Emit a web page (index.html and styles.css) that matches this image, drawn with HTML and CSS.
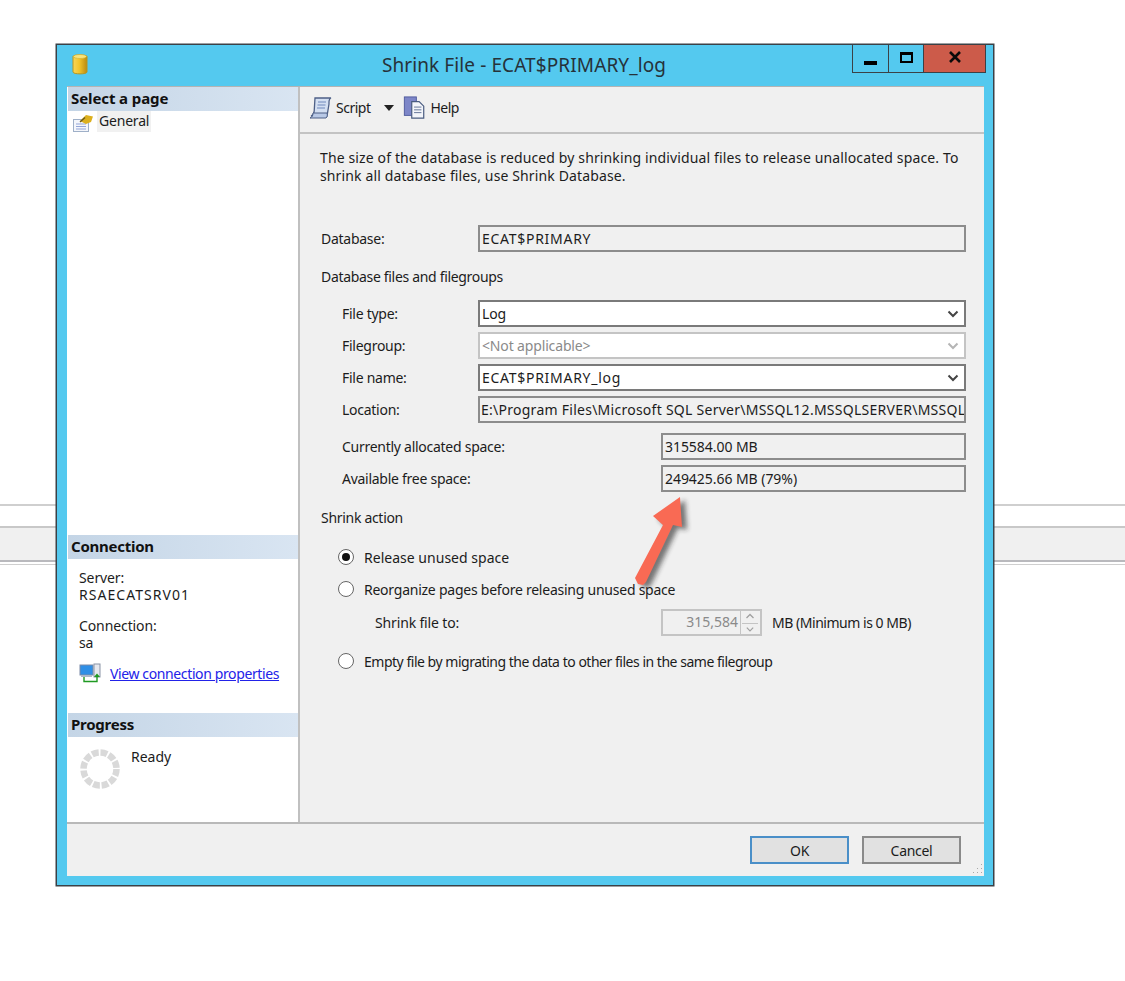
FILE: index.html
```html
<!DOCTYPE html>
<html lang="en">
<head>
<meta charset="utf-8">
<title>Shrink File</title>
<link rel="stylesheet" href="styles.css">
</head>
<body>
<div class="backdrop" aria-hidden="true">
  <div class="bg-line"></div>
  <div class="bg-band"></div>
  <div class="bg-line2"></div>
</div>
<div class="window">
  <header class="titlebar">
    <svg class="app-icon" width="18" height="24" viewBox="0 0 18 24">
      <defs><linearGradient id="gold" x1="0" x2="1" y1="0" y2="0"><stop offset="0" stop-color="#f7d65a"/><stop offset=".45" stop-color="#f2c42a"/><stop offset="1" stop-color="#b98a12"/></linearGradient></defs>
      <path d="M2 4.500C2 2.500 16 2.500 16 4.500V20C16 22.500 2 22.500 2 20Z" fill="url(#gold)" stroke="#b8961e" stroke-width="1"/>
      <ellipse cx="9" cy="4.500" rx="6.500" ry="2" fill="#f7e47e" stroke="#d1ad2c" stroke-width=".6"/>
    </svg>
    <div class="title">Shrink File - ECAT$PRIMARY_log</div>
    <div class="controls">
      <div class="ctl ctl-min"><span class="min-glyph"></span></div>
      <div class="ctl ctl-max"><span class="max-glyph"></span></div>
      <div class="ctl ctl-close">
        <svg width="14" height="12" viewBox="0 0 14 12"><path d="M2 1 12 11M12 1 2 11" stroke="#0b0b0b" stroke-width="2.600" fill="none"/></svg>
      </div>
    </div>
  </header>
  <div class="client">
    <div class="main">
      <aside class="side">
        <section class="side-top">
          <h2 class="side-head head-select">Select a page</h2>
          <div class="page-item">
            <svg class="page-icon" width="22" height="18" viewBox="0 0 22 18">
              <rect x="1.500" y="5.500" width="15" height="12" fill="#f4f6fb" stroke="#9fb0c8"/>
              <path d="M4 10h10M4 12.500h10M4 15h10" stroke="#93a5d8"/>
              <path d="M8 7 14 1 21 2.500 19 8 14 10Z" fill="#dcb01e"/>
              <path d="M8 8 13 3.500" stroke="#6a5a1a" stroke-width="1.400"/>
            </svg>
            <span class="page-name">General</span>
          </div>
        </section>
        <section class="side-conn">
          <h2 class="side-head">Connection</h2>
          <div class="conn-body">
            <div class="conn-block"><div>Server:</div><div class="upper">RSAECATSRV01</div></div>
            <div class="conn-block"><div>Connection:</div><div>sa</div></div>
            <div class="conn-link-row">
              <svg width="22" height="20" viewBox="0 0 22 20">
                <rect x="1" y="2" width="13" height="10" fill="#2f8fe6" stroke="#7b8aa8"/>
                <rect x="2" y="12" width="11" height="2" fill="#aeb7c8"/>
                <rect x="15" y="1" width="6" height="13" fill="#e6e8ee" stroke="#8a93a5"/>
                <path d="M5 14v4.500h13V13" fill="none" stroke="#1f9a22" stroke-width="1.400"/>
                <path d="M15 14l3-3.500 3 3.500z" fill="#1f9a22"/>
              </svg>
              <a class="conn-link" href="#">View connection properties</a>
            </div>
          </div>
        </section>
        <section class="side-progress">
          <h2 class="side-head">Progress</h2>
          <div class="prog-body">
            <svg class="spinner" width="42" height="42" viewBox="0 0 42 42">
              <circle cx="21" cy="21" r="16.500" fill="none" stroke="#d9d9d9" stroke-width="6.500" stroke-dasharray="6.800 1.840"/>
            </svg>
            <span class="ready">Ready</span>
          </div>
        </section>
      </aside>
      <main class="pane">
        <div class="toolbar">
          <svg class="tool-icon" width="24" height="24" viewBox="0 0 24 24">
            <path d="M6 2H22C19.500 3 20 6 20 8L18 20H2C4.500 19 5 17 5.200 15Z" fill="#d3dff2" stroke="#4d5f86" stroke-width="1.300"/>
            <path d="M9 6h8M8.500 9h8M8 12h8" stroke="#6f88bc"/>
            <path d="M1 22H17C18.500 21 18.500 18 18 17H4C4 20 3 21 1 22Z" fill="#b9c9e6" stroke="#4d5f86"/>
          </svg>
          <span class="tool-label">Script</span>
          <span class="tool-caret"></span>
          <svg class="tool-icon help-icon" width="23" height="24" viewBox="0 0 24 26">
            <rect x="1" y="1" width="13" height="20" fill="#7d86c8" stroke="#4e5a9c"/>
            <path d="M9 6h8l5 5v13H9Z" fill="#f3f5fa" stroke="#4a5c80" stroke-width="1.300"/>
            <path d="M11.500 12h8M11.500 15h8M11.500 18h8" stroke="#5d6f92"/>
          </svg>
          <span class="tool-label">Help</span>
        </div>
        <div class="form">
          <p class="intro">The size of the database is reduced by shrinking individual files to release unallocated space. To shrink all database files, use Shrink Database.</p>
          <div class="row row-db"><label class="lbl lbl-outer">Database:</label><div class="field ro upper-field">ECAT$PRIMARY</div></div>
          <div class="group-title gt-files">Database files and filegroups</div>
          <div class="rows">
            <div class="row"><label class="lbl">File type:</label><div class="field combo"><span>Log</span><svg class="chev" width="12" height="8" viewBox="0 0 12 8"><path d="M1.500 1.500 6 6l4.500-4.500" fill="none" stroke="#444" stroke-width="2"/></svg></div></div>
            <div class="row"><label class="lbl">Filegroup:</label><div class="field combo disabled"><span>&lt;Not applicable&gt;</span><svg class="chev" width="12" height="8" viewBox="0 0 12 8"><path d="M1.500 1.500 6 6l4.500-4.500" fill="none" stroke="#b5b5b5" stroke-width="2"/></svg></div></div>
            <div class="row"><label class="lbl">File name:</label><div class="field combo upper-field"><span>ECAT$PRIMARY_log</span><svg class="chev" width="12" height="8" viewBox="0 0 12 8"><path d="M1.500 1.500 6 6l4.500-4.500" fill="none" stroke="#444" stroke-width="2"/></svg></div></div>
            <div class="row"><label class="lbl">Location:</label><div class="field ro path">E:\Program Files\Microsoft SQL Server\MSSQL12.MSSQLSERVER\MSSQL</div></div>
          </div>
          <div class="rows rows-space">
            <div class="row"><label class="lbl lbl-wide">Currently allocated space:</label><div class="field ro num">315584.00 MB</div></div>
            <div class="row"><label class="lbl lbl-wide">Available free space:</label><div class="field ro num">249425.66 MB (79%)</div></div>
          </div>
          <div class="group-title gt-action">Shrink action</div>
          <div class="actions">
            <div class="radio-row"><span class="radio checked"></span><span class="rt-release">Release unused space</span></div>
            <div class="radio-row"><span class="radio"></span><span class="rt-reorg">Reorganize pages before releasing unused space</span></div>
            <div class="shrink-row">
              <span class="shrink-lbl">Shrink file to:</span>
              <div class="spin"><span class="spin-val">315,584</span><div class="spin-btns"><svg width="16" height="11" viewBox="0 0 16 11"><path d="M4.500 7 8 3.500 11.500 7" fill="none" stroke="#a0a0a0" stroke-width="1.300"/></svg><svg width="16" height="11" viewBox="0 0 16 11"><path d="M4.500 4 8 7.500 11.500 4" fill="none" stroke="#a0a0a0" stroke-width="1.300"/></svg></div></div>
              <span class="unit">MB (Minimum is 0 MB)</span>
            </div>
            <div class="radio-row"><span class="radio"></span><span class="rt-empty">Empty file by migrating the data to other files in the same filegroup</span></div>
          </div>
        </div>
      </main>
    </div>
    <footer class="footer">
      <button class="btn btn-default" type="button">OK</button>
      <button class="btn" type="button">Cancel</button>
      <svg class="grip" width="12" height="12" viewBox="0 0 12 12"><path d="M10 1h1v1h-1zM6 5h1v1H6zM10 5h1v1h-1zM2 9h1v1H2zM6 9h1v1H6zM10 9h1v1h-1z" fill="#a8a8a8"/></svg>
    </footer>
  </div>
</div>
<svg class="arrow" width="80" height="110" viewBox="0 0 80 110" aria-hidden="true">
  <defs><filter id="sh" x="-30%" y="-30%" width="170%" height="170%"><feGaussianBlur stdDeviation="2.500"/></filter></defs>
  <path d="M45 10 18 29 28 38 0 91 3 97 8 98 11 95 38 38 47 40Z" transform="translate(5 3)" fill="#222" opacity=".6" filter="url(#sh)"/>
  <path d="M45 10 18 29 28 38 0 91 3 97 8 98 11 95 38 38 47 40Z" fill="#f96a54"/>
</svg>
</body>
</html>
```
FILE: styles.css
```css
* { box-sizing: border-box; }
html, body { margin: 0; padding: 0; }
body {
  position: relative;
  width: 1125px;
  height: 981px;
  overflow: hidden;
  background: #fff;
  font-family: "Noto Sans", "Open Sans", sans-serif;
  font-size: 14px;
  color: #1c1c1c;
}
.backdrop { position: absolute; left: 0; right: 0; top: 504px; }
.bg-line { height: 2px; background: #cfcfcf; }
.bg-band { margin-top: 20px; height: 34px; background: #f0f0f0; border-top: 2px solid #c8c8c8; }
.bg-line2 { height: 5px; border-top: 2px solid #b9b9bd; border-bottom: 1px solid #cfcfcf; background: #fff; }

.window {
  position: absolute;
  left: 56px;
  top: 44px;
  width: 938px;
  height: 842px;
  background: #54c9ef;
  border: 1px solid #3b4146;
  box-shadow: 0 0 0 .5px #3b4146;
  display: flex;
  flex-direction: column;
}
.titlebar { position: relative; height: 41px; flex: none; display: flex; align-items: center; justify-content: center; }
.app-icon { position: absolute; left: 14px; top: 7px; }
.title { font-size: 19px; color: #26323a; letter-spacing: .1px; margin-top: -2px; margin-left: -2px; }
.controls { position: absolute; right: 7px; top: 0; height: 28px; display: flex; border: 1px solid #3b4146; border-top: 0; }
.ctl { height: 27px; display: flex; align-items: center; justify-content: center; }
.ctl-min { width: 36px; border-right: 1px solid #3b4146; }
.ctl-max { width: 35px; border-right: 1px solid #3b4146; }
.ctl-close { width: 61px; background: #cc5b4a; }
.min-glyph { width: 13px; height: 4px; background: #000; margin-top: 8px; }
.max-glyph { width: 13px; height: 11px; border: 2.500px solid #000; border-top-width: 3px; margin-top: -2px; }
.ctl-close svg { margin-top: -3px; }

.client { margin: 0 9px 9px 10px; flex: 1; display: flex; flex-direction: column; background: #f0f0f0; border-top: 1px solid #b4b4b4; min-height: 0; }
.main { flex: 1; display: flex; min-height: 0; border-bottom: 2px solid #b9b9b9; }
.side { width: 233px; flex: none; background: #fff; border-right: 2px solid #c0c0c0; display: flex; flex-direction: column; padding-left: 1px; }
.side-head {
  margin: 0;
  height: 24px;
  padding-left: 3px;
  font-size: 15px;
  line-height: 23px;
  font-weight: 700;
  letter-spacing: -.25px;
  color: #111;
  background: linear-gradient(90deg, #c4d5e6, #d9e5f2);
}
.head-select { letter-spacing: -.1px; }
.side-top { height: 448px; }
.page-item { display: flex; align-items: flex-start; height: 22px; padding-left: 4px; }
.page-icon { margin-top: 3px; }
.page-name { margin-left: 3px; padding: 0 2px; height: 21px; line-height: 20px; background: #f1f1f1; letter-spacing: -.2px; }
.side-conn { height: 178px; }
.conn-body { padding: 10px 0 0 11px; line-height: 17px; }
.conn-block { margin-bottom: 14px; letter-spacing: -.1px; }
.conn-block + .conn-block { margin-bottom: 12px; }
.upper { letter-spacing: 1.05px; }
.conn-link-row { display: flex; align-items: center; gap: 9px; }
.conn-link { color: #2222e8; letter-spacing: -.38px; }
.prog-body { display: flex; padding: 11px 0 0 11px; }
.ready { margin-left: 10px; margin-top: -1px; }

.pane { flex: 1; display: flex; flex-direction: column; min-width: 0; }
.toolbar { height: 47px; flex: none; display: flex; align-items: center; padding: 0 0 4px 9px; border-bottom: 2px solid #c3c3c3; letter-spacing: -.5px; }
.tool-label { margin-left: 3px; }
.tool-caret { width: 0; height: 0; margin-left: 14px; border: 5px solid transparent; border-top: 6px solid #222; border-bottom: 0; }
.help-icon { margin-left: 9px; }
.help-icon + .tool-label { margin-left: 4px; }
.form { flex: 1; padding: 15px 18px 0 20px; }
.intro { margin: 0; width: 650px; line-height: 18px; letter-spacing: .13px; }
.row { display: flex; align-items: center; height: 27px; }
.row-db { margin-top: 40px; }
.lbl { width: 158px; flex: none; padding-left: 22px; letter-spacing: -.27px; }
.lbl-outer { padding-left: 1px; }
.lbl-wide { width: 341px; }
.field { flex: 1; min-width: 0; height: 27px; line-height: 24px; padding: 0 2px; border: 2px solid #8c8c8c; white-space: nowrap; overflow: hidden; letter-spacing: -.15px; }
.ro { background: #f0f0f0; }
.upper-field { letter-spacing: .72px; }
.path { letter-spacing: .26px; padding-left: 1px; }
.num { letter-spacing: -.05px; }
.combo { background: #fff; border-color: #7a7a7a; display: flex; justify-content: space-between; align-items: center; padding-left: 2px; padding-right: 5px; }
.combo.disabled { border-color: #c4c4c4; color: #8a8a8a; }
.chev { flex: none; }
.group-title { padding-left: 1px; }
.gt-files { margin-top: 15px; height: 21px; line-height: 20px; letter-spacing: -.32px; }
.rows { display: flex; flex-direction: column; gap: 5px; margin-top: 12px; }
.rows-space { margin-top: 10px; }
.gt-action { margin-top: 16px; height: 20px; line-height: 20px; letter-spacing: -.3px; }
.actions { margin-top: 19px; padding-left: 18px; }
.radio-row { display: flex; align-items: center; gap: 10px; height: 20px; margin-bottom: 12px; }
.rt-release { letter-spacing: .02px; }
.rt-reorg { letter-spacing: -.24px; }
.rt-empty { letter-spacing: -.48px; }
.radio { width: 16px; height: 16px; flex: none; border-radius: 50%; border: 1.500px solid #666; background: #fff; display: flex; align-items: center; justify-content: center; }
.radio.checked::after { content: ""; width: 8px; height: 8px; border-radius: 50%; background: #111; }
.shrink-row { display: flex; align-items: center; height: 27px; margin: -2px 0 15px; }
.shrink-lbl { width: 323px; padding-left: 37px; flex: none; letter-spacing: -.15px; }
.spin { width: 101px; height: 27px; border: 2px solid #c4c4c4; display: flex; justify-content: space-between; flex: none; background: #f0f0f0; }
.spin-val { flex: 1; text-align: right; color: #8a8a8a; line-height: 22px; padding-right: 2px; }
.spin-btns { width: 20px; display: flex; flex-direction: column; justify-content: space-between; border-left: 1px solid #c4c4c4; }
.spin-btns svg { display: block; margin-left: 1px; }
.spin-btns svg + svg { border-top: 1px solid #c4c4c4; }
.unit { margin-left: 10px; letter-spacing: -.47px; }

.footer { position: relative; height: 52px; flex: none; display: flex; justify-content: flex-end; align-items: flex-start; gap: 13px; padding: 12px 23px 0 0; }
.btn { width: 99px; height: 28px; background: #e1e1e1; border: 2px solid #8a8a8a; padding: 0; font: inherit; color: #1c1c1c; letter-spacing: -.3px; }
.btn-default { border-color: #4a8fc8; }
.grip { position: absolute; right: 1px; bottom: 1px; }
.arrow { position: absolute; left: 635px; top: 487px; }
```
